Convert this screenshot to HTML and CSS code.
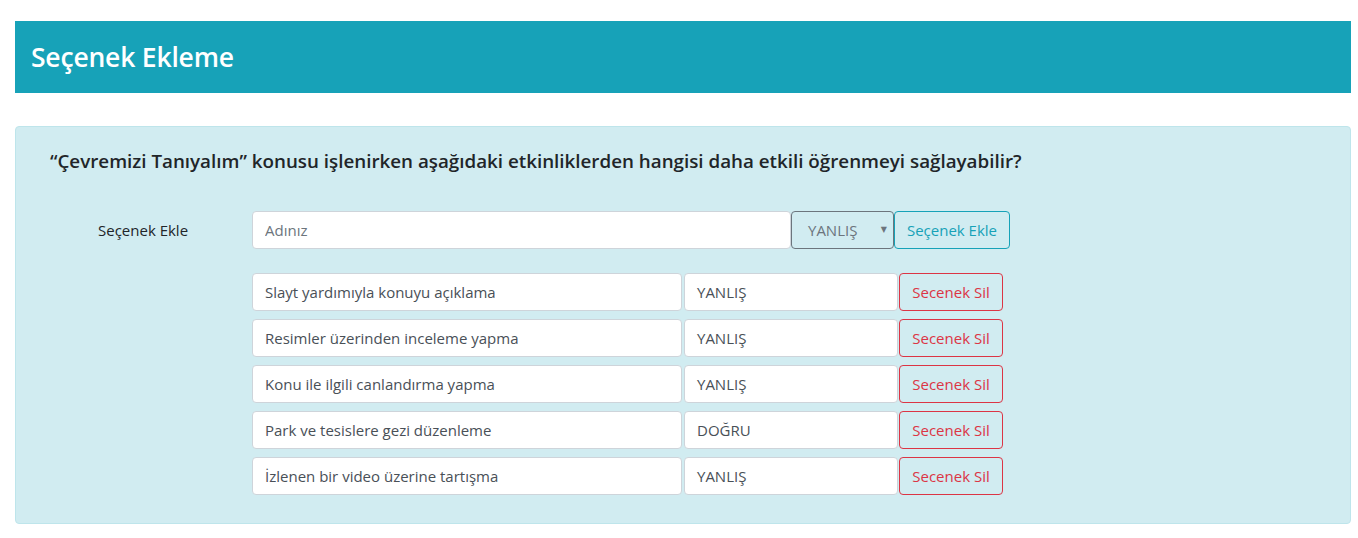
FILE: index.html
```html
<!DOCTYPE html>
<html lang="tr">
<head>
<meta charset="utf-8">
<title>Seçenek Ekleme</title>
<link rel="stylesheet" href="styles.css">
</head>
<body>
<div class="page">
  <header class="banner">
    <h1 class="banner-title">Seçenek Ekleme</h1>
  </header>
  <section class="card">
    <h2 class="question">“Çevremizi Tanıyalım” konusu işlenirken aşağıdaki etkinliklerden hangisi daha etkili öğrenmeyi sağlayabilir?</h2>
    <div class="add-row">
      <label class="add-label">Seçenek Ekle</label>
      <input class="field field-name" type="text" placeholder="Adınız">
      <div class="select">YANLIŞ<span class="caret">▼</span></div>
      <button class="btn btn-info">Seçenek Ekle</button>
    </div>
    <div class="list">
      <div class="item">
        <div class="field field-text">Slayt yardımıyla konuyu açıklama</div>
        <div class="field field-val">YANLIŞ</div>
        <button class="btn btn-danger">Secenek Sil</button>
      </div>
      <div class="item">
        <div class="field field-text">Resimler üzerinden inceleme yapma</div>
        <div class="field field-val">YANLIŞ</div>
        <button class="btn btn-danger">Secenek Sil</button>
      </div>
      <div class="item">
        <div class="field field-text">Konu ile ilgili canlandırma yapma</div>
        <div class="field field-val">YANLIŞ</div>
        <button class="btn btn-danger">Secenek Sil</button>
      </div>
      <div class="item">
        <div class="field field-text">Park ve tesislere gezi düzenleme</div>
        <div class="field field-val">DOĞRU</div>
        <button class="btn btn-danger">Secenek Sil</button>
      </div>
      <div class="item">
        <div class="field field-text">İzlenen bir video üzerine tartışma</div>
        <div class="field field-val">YANLIŞ</div>
        <button class="btn btn-danger">Secenek Sil</button>
      </div>
    </div>
  </section>
</div>
</body>
</html>
```
FILE: styles.css
```css
* { box-sizing: border-box; }
html, body { margin: 0; padding: 0; background: #fff; }
body {
  font-family: "Open Sans", "Noto Sans", "DejaVu Sans", sans-serif;
  color: #212529;
  font-size: 15px;
}
.page {
  padding: 21px 7px 0 15px;
}
.banner {
  background: #17a2b8;
  height: 72px;
  display: flex;
  align-items: center;
  padding-left: 16px;
}
.banner-title {
  margin: 0;
  color: #fff;
  font-size: 26.5px;
  font-weight: 600;
  letter-spacing: -0.2px;
}
.card {
  margin-top: 33px;
  background: #d1ecf1;
  border: 1px solid #bee5eb;
  border-radius: 4px;
  padding: 21px 0 28px 34px;
}
.question {
  margin: 0;
  font-size: 18.8px;
  font-weight: 600;
  color: #212529;
  line-height: 26px;
}
.add-row {
  display: flex;
  align-items: center;
  margin-top: 37px;
}
.add-label {
  width: 202px;
  padding-left: 48px;
  font-size: 15px;
  color: #212529;
}
.field {
  height: 38px;
  border: 1px solid #ced4da;
  border-radius: 4px;
  background: #fff;
  padding: 0 12px;
  font-family: inherit;
  font-size: 15px;
  color: #495057;
  display: flex;
  align-items: center;
}
.field-name {
  width: 539px;
  outline: none;
}
.field-name::placeholder { color: #6c757d; }
.select {
  width: 103px;
  height: 38px;
  border: 1px solid #6c757d;
  border-radius: 4px;
  display: flex;
  align-items: center;
  padding-left: 16px;
  position: relative;
  color: #6c757d;
  font-size: 15px;
}
.caret {
  position: absolute;
  right: 6px;
  top: 11px;
  font-size: 8px;
  color: #6c757d;
}
.btn {
  height: 38px;
  border-radius: 4px;
  background: transparent;
  font-family: inherit;
  font-size: 15px;
  padding: 0 10px;
  cursor: pointer;
}
.btn-info {
  border: 1px solid #17a2b8;
  color: #17a2b8;
  margin-left: 0;
  width: 116px;
}
.btn-danger {
  border: 1px solid #dc3545;
  color: #dc3545;
  width: 104px;
  margin-left: 1px;
}
.list {
  margin-top: 24px;
  margin-left: 202px;
  display: flex;
  flex-direction: column;
  gap: 8px;
}
.item {
  display: flex;
  align-items: center;
}
.field-text { width: 430px; }
.field-val { width: 214px; margin-left: 2px; }
```
